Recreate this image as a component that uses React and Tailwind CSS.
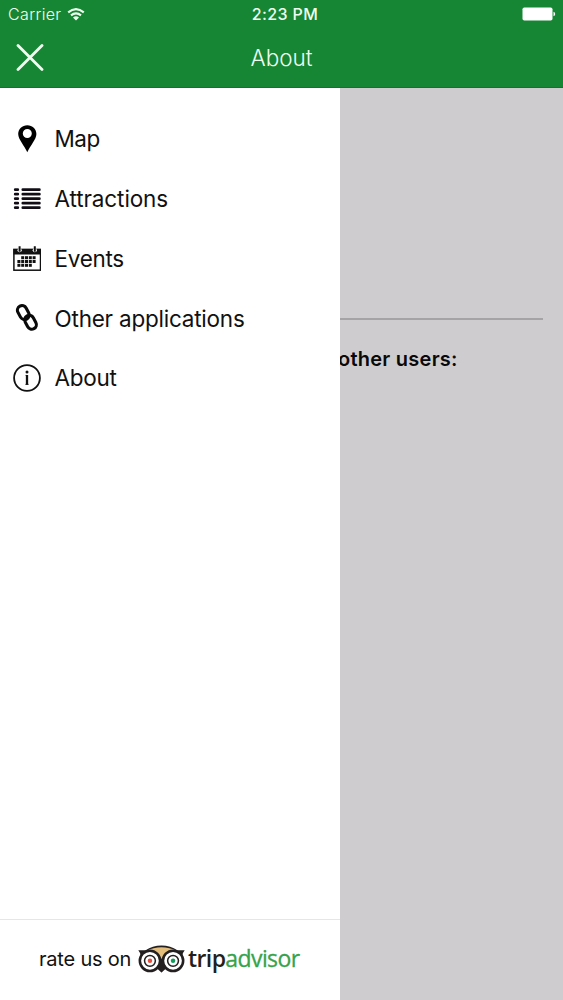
import React from 'react';

const WifiIcon = () => (
  <svg className="w-[18px] h-[13px]" viewBox="0 0 18 13" fill="none" stroke="#effff0" strokeWidth="2.1">
    <path d="M1.2 4.4 Q9 -2.2 16.8 4.4" />
    <path d="M4 7.4 Q9 3.2 14 7.4" />
    <path d="M6 9.4 Q9 7.2 12 9.4 L9 12.6 Z" fill="#effff0" stroke="none" />
  </svg>
);

const BatteryIcon = () => (
  <svg className="w-[34px] h-[14px]" viewBox="0 0 34 14" fill="#ffffff">
    <rect x="0.5" y="0.5" width="30" height="13" rx="1.8" />
    <path d="M31.5 4.8 Q33.2 5.2 33.2 7 Q33.2 8.8 31.5 9.2 Z" />
  </svg>
);

const CloseIcon = () => (
  <svg className="w-7 h-7" viewBox="0 0 28 28" stroke="#f2fff2" strokeWidth="2.8" strokeLinecap="round">
    <path d="M2 1.5 L26 25.5 M26 1.5 L2 25.5" />
  </svg>
);

const PinIcon = () => (
  <svg className="w-7 h-7" viewBox="0 0 28 28">
    <path
      d="M14.3 0.2 C9.2 0.2 5.2 3.9 5.2 9 C5.2 14.4 11.3 20.4 14.3 27.2 C17.3 20.4 23.4 14.4 23.4 9 C23.4 3.9 19.4 0.2 14.3 0.2 Z M14.3 4 A4.5 4.5 0 1 1 14.3 13 A4.5 4.5 0 1 1 14.3 4 Z"
      fill="#000"
      fillRule="evenodd"
    />
  </svg>
);

const ListIcon = () => (
  <svg className="w-7 h-7" viewBox="0 0 28 28" stroke="#120c16" strokeWidth="2.7" strokeLinecap="round">
    {[4.7, 9.2, 13.7, 18.2, 22.7].map((y) => (
      <path key={y} d={`M2.2 ${y} H4.8 M9.8 ${y} H26.4`} />
    ))}
  </svg>
);

const calendarDots = [
  [9.2, 11.2], [13, 11.2], [16.8, 11.2], [20.6, 11.2],
  [5.4, 15], [9.2, 15], [13, 15], [16.8, 15], [20.6, 15],
  [5.4, 18.8], [9.2, 18.8], [13, 18.8], [16.8, 18.8],
];

const CalendarIcon = () => (
  <svg className="w-7 h-7" viewBox="0 0 28 28">
    <rect x="0.9" y="4.4" width="26.6" height="20.8" fill="none" stroke="#111" strokeWidth="1.5" />
    <rect x="0.5" y="4" width="27.4" height="5.5" fill="#111" />
    <g fill="#fff">
      <circle cx="6.6" cy="5.2" r="2.1" />
      <circle cx="21.8" cy="5.2" r="2.1" />
    </g>
    <path d="M6.6 1.2 V6.8 M21.8 1.2 V6.8" stroke="#111" strokeWidth="2" />
    <g fill="#111">
      {calendarDots.map(([x, y]) => (
        <rect key={`${x}-${y}`} x={x - 1} y={y} width="3" height="3" />
      ))}
    </g>
  </svg>
);

const LinkIcon = () => (
  <svg className="w-7 h-7" viewBox="0 0 28 28" fill="none" stroke="#0a0a0a" strokeWidth="3.1">
    <rect x="-4.6" y="-7.3" width="9.2" height="14.6" rx="4.6" transform="translate(10.3 8.6) rotate(-28)" />
    <rect x="-4.6" y="-7.3" width="9.2" height="14.6" rx="4.6" transform="translate(17.5 18.2) rotate(-28)" />
  </svg>
);

const InfoIcon = () => (
  <svg className="w-7 h-7" viewBox="0 0 28 28" fill="none" stroke="#111" strokeWidth="1.8">
    <circle cx="14" cy="14" r="12.9" />
    <circle cx="14" cy="8" r="1.5" fill="#111" stroke="none" />
    <path d="M14 11 V20.8" strokeWidth="2.3" />
    <path d="M12.5 11.4 H14 M12.3 20.4 H15.7" strokeWidth="0.7" />
  </svg>
);

const OwlLogo = () => (
  <svg className="w-[47px] h-7 shrink-0 -mt-0.5" viewBox="0 0 46 27">
    <path d="M0.3 5 H7.5 Q14 0.4 23 0.4 Q32 0.4 38.5 5 H45.7 Q44.1 7 43.3 10 L33 18 L23 26.8 L13 18 L2.7 10 Q1.9 7 0.3 5 Z" fill="#231f20" />
    <path d="M8.4 5.5 Q15 1.9 23 1.9 Q31 1.9 37.6 5.5 Q26 6.6 23 13.6 Q20 6.6 8.4 5.5 Z" fill="#e2bd7c" />
    {[[11.7, '#e8503f'], [34.3, '#139b5b']].map(([x, color]) => (
      <g key={x}>
        <circle cx={x} cy="15.3" r="9.9" fill="#fff" stroke="#231f20" strokeWidth="2.5" />
        <circle cx={x} cy="15.3" r="5.3" fill="#fff" stroke="#231f20" strokeWidth="1.5" />
        <circle cx={x} cy="15.3" r="2.2" fill={color} />
      </g>
    ))}
    <path d="M20.6 22.5 L23 26.8 L25.4 22.5 L23 19.5 Z" fill="#231f20" />
  </svg>
);

const menuItems = [
  { label: 'Map', icon: PinIcon, tracking: 'tracking-[-0.5px]' },
  { label: 'Attractions', icon: ListIcon, tracking: 'tracking-[-0.1px]' },
  { label: 'Events', icon: CalendarIcon, tracking: 'tracking-[-0.3px]' },
  { label: 'Other applications', icon: LinkIcon, tracking: 'tracking-[-0.22px]' },
  { label: 'About', icon: InfoIcon, tracking: 'tracking-[-0.3px]' },
];

const Header = () => (
  <header className="h-[88px] shrink-0 bg-[#178634] border-b border-[#127329] text-[#effff0]">
    <div className="h-7 grid grid-cols-3 items-center pl-2 pr-[7px] text-base leading-7">
      <div className="flex items-center gap-1.5">
        <span className="tracking-[0.35px] font-light">Carrier</span>
        <WifiIcon />
      </div>
      <span className="pl-1.5 text-center font-medium whitespace-nowrap tracking-[0.4px]">2:23 PM</span>
      <div className="flex justify-end">
        <BatteryIcon />
      </div>
    </div>
    <div className="h-[60px] grid grid-cols-3 items-center px-4">
      <button type="button" aria-label="Close menu" className="w-7 h-7">
        <CloseIcon />
      </button>
      <h1 className="text-center text-[22.5px] font-light">About</h1>
    </div>
  </header>
);

const Drawer = () => (
  <aside className="w-[340px] shrink-0 bg-white flex flex-col text-[#111]">
    <nav className="flex-1 pt-[21px]">
      {menuItems.map(({ label, icon: Icon, tracking }) => (
        <a key={label} href="#" className="h-[59.85px] flex items-center gap-[13.5px] pl-[13px]">
          <Icon />
          <span className={`text-[22.5px] whitespace-nowrap ${tracking}`}>{label}</span>
        </a>
      ))}
    </nav>
    <footer className="h-[81px] border-t border-[#e7e6e7] flex items-center pl-[39px]">
      <span className="text-[20px] whitespace-nowrap w-[99px] tracking-[-0.2px] -mt-0.5">rate us on</span>
      <OwlLogo />
      <span className="ml-[3px] -mt-[3px] text-[23px] font-['Open_Sans','Noto_Sans',sans-serif] font-semibold text-[#231f20] tracking-[-0.6px] whitespace-nowrap">
        trip<span className="text-[#36a34a] font-normal [-webkit-text-stroke:0.3px_#36a34a]">advisor</span>
      </span>
    </footer>
  </aside>
);

const App = () => {
  return (
    <div className="w-[563px] h-[1000px] flex flex-col overflow-hidden bg-[#cfcccf] font-['Inter','Liberation_Sans',sans-serif]">
      <Header />
      <div className="flex flex-1">
        <Drawer />
        <main className="flex-1 min-w-0 pt-[230px] overflow-hidden">
          <div className="h-[2px] mr-5 bg-[#a5a3a6]"></div>
          <p className="mt-[25px] -ml-[2px] text-[20px] leading-7 font-semibold text-[#09080b] tracking-[0.25px] whitespace-nowrap">other users:</p>
        </main>
      </div>
    </div>
  );
};

export default App;
